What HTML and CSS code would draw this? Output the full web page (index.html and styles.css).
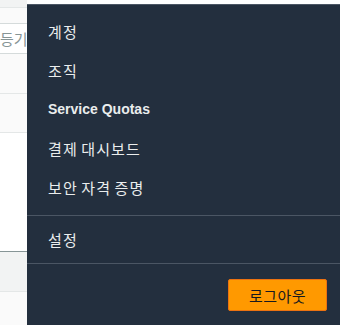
FILE: index.html
```html
<!doctype html>
<html>
  <head>
    <meta name="viewport" content="width=device-width">
    <title>Account menu</title>
    <link rel="stylesheet" href="styles.css">
  </head>
  <body>
    <div class="screen">

      <div class="page">
        <div class="topband"></div>
        <div class="band light row1">
          <div class="search"><span>등기화</span></div>
        </div>
        <div class="band light row2"></div>
        <div class="band white row3"></div>
        <div class="band grey row4"></div>
        <div class="band light row5"></div>
      </div>

      <div class="menu">
        <ul class="section">
          <li class="item">계정</li>
          <li class="item">조직</li>
          <li class="item latin">Service Quotas</li>
          <li class="item">결제 대시보드</li>
          <li class="item">보안 자격 증명</li>
        </ul>
        <ul class="section settings">
          <li class="item">설정</li>
        </ul>
        <div class="footer">
          <button class="logout">로그아웃</button>
        </div>
      </div>

    </div>
  </body>
</html>
```

FILE: styles.css
```css
body {
  margin: 0;
  font-family: "Noto Sans CJK KR", "Liberation Sans", sans-serif;
  font-size: 14px;
}

.screen {
  display: flex;
  width: 340px;
  height: 325px;
  overflow: hidden;
}

/* the page that lies under the open menu */
.page {
  width: 27px;
  flex: none;
  overflow: hidden;
  display: flex;
  flex-direction: column;
  background: #fafafa;
}

.topband {
  height: 7px;
  background: #f2f3f3;
  border-bottom: 1px solid #e4e7e7;
}

.band {
  box-sizing: border-box;
  flex: none;
}

.light {
  background: #fafafa;
}

.row1 {
  height: 86px;
  padding-top: 15px;
  border-bottom: 1px solid #e4e7e7;
}

.search {
  width: 60px;
  height: 31px;
  box-sizing: border-box;
  margin-left: -10px;
  padding-left: 9px;
  border: 1px solid #d5dbdb;
  background: #ffffff;
  color: #879596;
  line-height: 29px;
  font-size: 15px;
  white-space: nowrap;
}

.row2 {
  height: 39px;
  border-bottom: 1px solid #e4e7e7;
}

.row3 {
  height: 119px;
  background: #ffffff;
  border-bottom: 1px solid #879596;
}

.row4 {
  height: 40px;
  background: #f2f3f3;
  border-bottom: 1px solid #e4e7e7;
}

.row5 {
  flex: 1;
}

/* dropdown menu */
.menu {
  flex: 1;
  margin-top: 4px;
  background: #232f3e;
  border-top: 1px solid #4b5664;
  display: flex;
  flex-direction: column;
}

.section {
  list-style: none;
  margin: 0;
  padding: 7px 0 8px;
  border-bottom: 1px solid #4b5664;
}

.section.settings {
  padding: 4px 0 4px;
}

.item {
  height: 39px;
  line-height: 39px;
  padding-left: 21px;
  color: #eaeded;
  font-size: 15px;
  letter-spacing: 1.1px;
  word-spacing: -1px;
  white-space: nowrap;
}

.latin {
  font-family: "Liberation Sans", sans-serif;
  font-size: 14px;
  font-weight: bold;
  letter-spacing: 0;
  word-spacing: 0;
}

.footer {
  display: flex;
  justify-content: flex-end;
  padding: 15px 13px 0 0;
}

.logout {
  width: 99px;
  height: 32px;
  padding: 0;
  border: 1px solid #ec7211;
  border-radius: 2px;
  background: #ff9900;
  color: #16191f;
  font-family: "Noto Sans CJK KR", sans-serif;
  font-size: 15px;
  letter-spacing: 0.5px;
}
```
